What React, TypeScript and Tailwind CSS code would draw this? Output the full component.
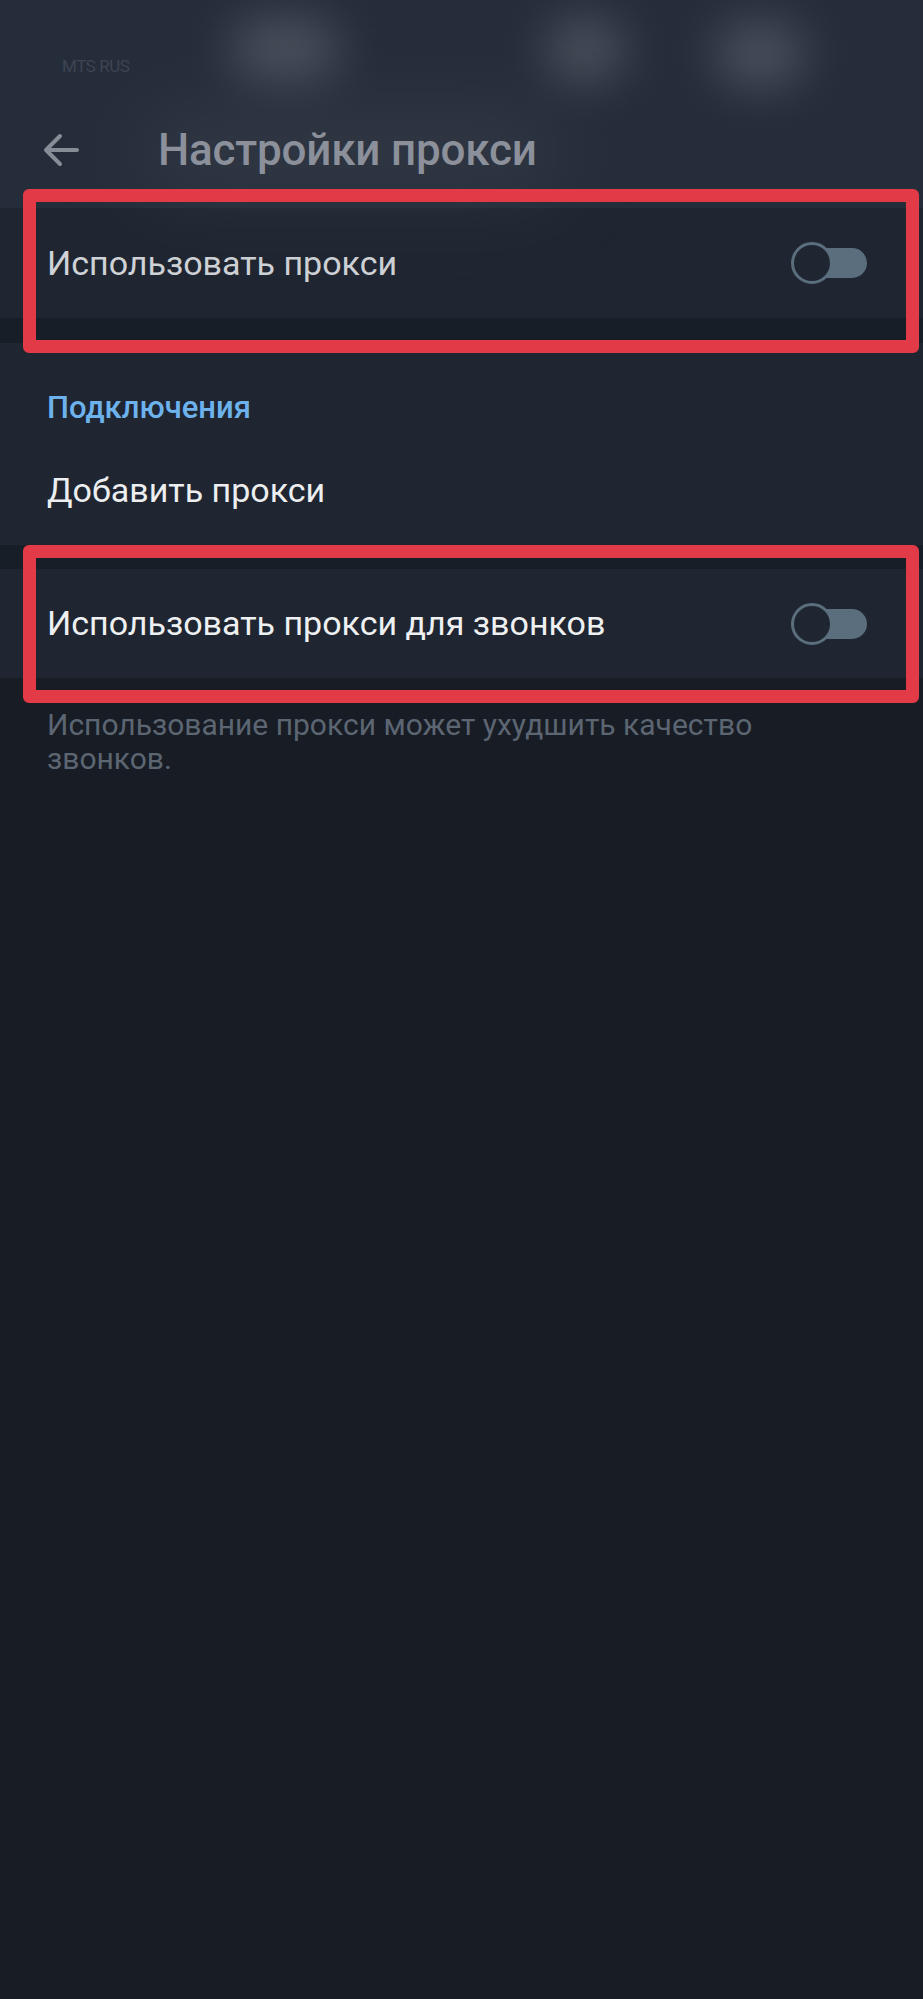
import React from "react";

function Toggle() {
  return (
    <div className="relative w-[76px] h-[42px] flex items-center">
      <div className="absolute left-[20px] right-0 h-[30px] rounded-full bg-[#5a6e7e]" />
      <div className="relative w-[42px] h-[42px] rounded-full border-[3px] border-[#5a6e7e] bg-[#1f2631]" />
    </div>
  );
}

function Highlight({ top, height }: { top: number; height: number }) {
  return (
    <div
      className="absolute left-[23px] right-[4px] border-[13px] border-[#e23a46] rounded-[6px] pointer-events-none"
      style={{ top, height }}
    />
  );
}

export default function App() {
  const font = { fontFamily: "Roboto, 'Noto Sans', sans-serif" };

  return (
    <div className="relative w-[923px] h-[1999px] bg-[#171c25] overflow-hidden" style={font}>
      {/* status bar + toolbar */}
      <div className="bg-[#262d3a]">
        <div className="relative h-[92px] flex items-start pt-[58px] px-[62px]">
          <div className="absolute left-[230px] top-[18px] w-[110px] h-[64px] rounded-full bg-[#5b616d] blur-xl opacity-70" />
          <div className="absolute left-[545px] top-[18px] w-[80px] h-[64px] rounded-full bg-[#5b616d] blur-xl opacity-70" />
          <div className="absolute left-[715px] top-[22px] w-[90px] h-[64px] rounded-full bg-[#5b616d] blur-xl opacity-70" />
          <span className="relative text-[17px] leading-none text-[#3d4452] tracking-tight">MTS RUS</span>
        </div>
        <div className="relative h-[116px] flex items-center">
          <div className="absolute left-[140px] top-[20px] w-[420px] h-[80px] rounded-full bg-[#3a414d] blur-2xl opacity-60" />
          <div className="relative w-[158px] flex justify-start pl-[43px]">
            <svg width="36" height="34" viewBox="0 0 36 34" fill="none">
              <path
                d="M34 17H4M17 3L3 17L17 31"
                stroke="#878d97"
                strokeWidth="4"
                strokeLinecap="round"
                strokeLinejoin="round"
              />
            </svg>
          </div>
          <h1 className="relative text-[44px] font-medium text-[#8b909a] tracking-[-0.2px]">Настройки прокси</h1>
        </div>
      </div>

      {/* use proxy */}
      <div className="h-[110px] bg-[#1f2631] flex items-center justify-between pl-[47px] pr-[56px]">
        <span className="text-[34px] text-[#cfd2d6]">Использовать прокси</span>
        <Toggle />
      </div>
      <div className="h-[25px] bg-[#181e27]" />

      {/* connections */}
      <div className="bg-[#1f2631]">
        <div className="h-[92px] pt-[45px] pl-[47px]">
          <div className="text-[31px] leading-[40px] font-medium text-[#6db2ec]">Подключения</div>
        </div>
        <div className="h-[110px] flex items-center pl-[47px]">
          <span className="text-[34px] text-[#eceef0]">Добавить прокси</span>
        </div>
      </div>
      <div className="h-[24px] bg-[#181e27]" />

      {/* calls */}
      <div className="h-[109px] bg-[#1f2631] flex items-center justify-between pl-[47px] pr-[56px]">
        <span className="text-[34px] text-[#eef0f2]">Использовать прокси для звонков</span>
        <Toggle />
      </div>
      <p className="pt-[30px] pl-[47px] pr-[60px] text-[30px] leading-[34px] text-[#5c6672]">
        Использование прокси может ухудшить качество звонков.
      </p>

      <Highlight top={189} height={164} />
      <Highlight top={545} height={158} />
    </div>
  );
}
